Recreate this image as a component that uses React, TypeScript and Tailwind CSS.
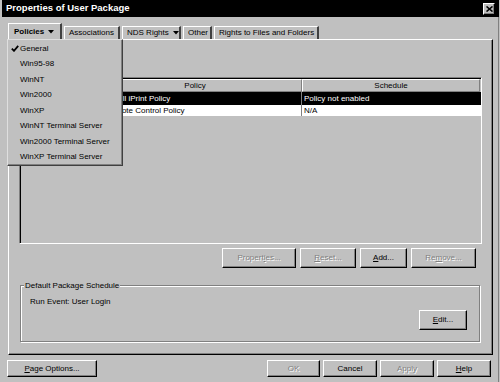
import React from 'react';

const raised =
  'border border-t-white border-l-white border-r-black border-b-black shadow-[inset_-1px_-1px_0_#808080]';
const disabledText = 'text-[#808080] [text-shadow:1px_1px_0_#ffffff]';
const tab =
  'shrink-0 whitespace-nowrap h-[13px] border-t border-l border-t-white border-l-white border-r-2 border-r-[#404040] flex items-center pl-[4px]';

type BtnProps = {
  children: React.ReactNode;
  w: string;
  h?: string;
  disabled?: boolean;
};

function Btn({ children, w, h = 'h-[20px]', disabled }: BtnProps) {
  return (
    <div
      className={`${w} ${h} ${raised} shrink-0 whitespace-nowrap flex items-center justify-center bg-[#c0c0c0] ${
        disabled ? disabledText : 'text-black'
      }`}
    >
      <span>{children}</span>
    </div>
  );
}

const U = ({ c }: { c: string }) => <span className="underline underline-offset-1">{c}</span>;

const Arrow = () => (
  <svg width="6" height="4" viewBox="0 0 6 4" className="ml-[4px] shrink-0">
    <path d="M0 0 L6 0 L3 3.5 Z" fill="#000" />
  </svg>
);

const menuItems = [
  'General',
  'Win95-98',
  'WinNT',
  'Win2000',
  'WinXP',
  'WinNT Terminal Server',
  'Win2000 Terminal Server',
  'WinXP Terminal Server',
];

const App: React.FC = () => {
  return (
    <div
      className="relative w-[500px] h-[382px] overflow-hidden bg-[#c0c0c0] flex flex-col text-[8px] text-black"
      style={{ fontFamily: '"Liberation Sans", Arial, sans-serif' }}
    >
      {/* title bar */}
      <div className="ml-[2px] mr-[1px] h-[17px] bg-black flex items-center justify-between pl-[4px] pr-[4px]">
        <span className="text-white font-bold text-[9.5px]">Properties of User Package</span>
        <div className={`w-[12px] h-[12px] ${raised} bg-[#c0c0c0] flex items-center justify-center`}>
          <svg width="7" height="6" viewBox="0 0 7 6">
            <path d="M0.5 0.5 L6.5 5.5 M6.5 0.5 L0.5 5.5" stroke="#000" strokeWidth="1.6" />
          </svg>
        </div>
      </div>

      {/* tabs */}
      <div className="mt-[6px] h-[16px] pl-[8px] flex items-end gap-[2px] relative z-10">
        <div className="shrink-0 whitespace-nowrap w-[54px] h-[17px] -mb-[1px] bg-[#c0c0c0] border-t border-l border-t-white border-l-white border-r-2 border-r-[#404040] flex items-center pl-[5px] font-bold">
          Policies
          <Arrow />
        </div>
        <div className={`${tab} w-[56px]`}>Associations</div>
        <div className={`${tab} w-[59px]`}>
          NDS Rights
          <Arrow />
        </div>
        <div className={`${tab} w-[29px]`}>Other</div>
        <div className={`${tab} w-[105px]`}>Rights to Files and Folders</div>
      </div>

      {/* panel */}
      <div className="ml-[8px] w-[485px] h-[316px] border border-t-white border-l-white border-r-black border-b-black shadow-[inset_-1px_-1px_0_#808080] flex flex-col">
        {/* table */}
        <div className="mt-[37px] ml-[10px] w-[463px] h-[167px] border border-t-[#808080] border-l-[#808080] border-r-white border-b-white shadow-[inset_1px_1px_0_#000] pt-[1px] pl-[1px] flex flex-col">
          <div className="flex h-[13px]">
            <div className="w-[67px] border border-t-white border-l-white border-r-[#808080] border-b-[#808080]" />
            <div className="w-[214px] border border-t-white border-l-white border-r-[#808080] border-b-[#808080] flex items-center justify-center">
              Policy
            </div>
            <div className="w-[178px] border border-t-white border-l-white border-r-[#808080] border-b-[#808080] flex items-center justify-center">
              Schedule
            </div>
          </div>
          <div className="flex h-[13px] bg-black text-white items-center whitespace-nowrap">
            <div className="w-[67px] h-full" />
            <div className="w-[214px] h-full flex items-center pl-[16px] border-r border-r-[#808080]">Novell iPrint Policy</div>
            <div className="w-[178px] h-full flex items-center pl-[2px]">Policy not enabled</div>
          </div>
          <div className="flex h-[12px] bg-white items-center border-b border-b-[#c0c0c0] whitespace-nowrap">
            <div className="w-[67px] h-full border-r border-r-[#c0c0c0]" />
            <div className="w-[214px] h-full flex items-center pl-[17px] border-r border-r-[#808080]">Remote Control Policy</div>
            <div className="w-[178px] h-full flex items-center pl-[2px]">N/A</div>
          </div>
        </div>

        {/* list buttons */}
        <div className="mt-[4px] ml-[213px] flex gap-[4px]">
          <Btn w="w-[74px]" disabled>
            Propert<U c="i" />es...
          </Btn>
          <Btn w="w-[56px]" disabled>
            <U c="R" />eset...
          </Btn>
          <Btn w="w-[47px]">
            <U c="A" />dd...
          </Btn>
          <Btn w="w-[65px]" disabled>
            Re<U c="m" />ove...
          </Btn>
        </div>

        {/* group box */}
        <div className="mt-[17px] ml-[11px] w-[460px] h-[57px] border border-[#808080] shadow-[inset_1px_1px_0_#fff,1px_1px_0_#fff] relative flex flex-col">
          <span className="absolute -top-[6px] left-[3px] bg-[#c0c0c0] px-[1px] leading-[11px] whitespace-nowrap">
            Default Package Schedule
          </span>
          <div className="mt-[10px] ml-[9px] leading-[11px]">Run Event: User Login</div>
          <div className="mt-[3px] ml-[398px]">
            <Btn w="w-[48px]">
              <U c="E" />dit...
            </Btn>
          </div>
        </div>
      </div>

      {/* bottom buttons */}
      <div className="mt-[5px] pl-[7px] flex">
        <Btn w="w-[90px]" h="h-[17px]">
          <U c="P" />age Options...
        </Btn>
        <div className="ml-[170px] flex gap-[3px]">
          <Btn w="w-[53px]" h="h-[17px]" disabled>
            OK
          </Btn>
          <Btn w="w-[54px]" h="h-[17px]">
            Cancel
          </Btn>
          <Btn w="w-[54px]" h="h-[17px]" disabled>
            Apply
          </Btn>
          <Btn w="w-[54px]" h="h-[17px]">
            <U c="H" />elp
          </Btn>
        </div>
      </div>

      {/* dropdown menu */}
      <div className="absolute left-[7px] top-[39px] w-[116px] h-[127px] z-20 bg-[#c0c0c0] border border-t-[#dfdfdf] border-l-[#dfdfdf] border-r-[#404040] border-b-[#404040] shadow-[inset_-1px_-1px_0_#808080] pt-[1px] flex flex-col">
        {menuItems.map((m, i) => (
          <div key={m} className="h-[15.5px] flex items-center whitespace-nowrap">
            <span className="w-[12px] flex justify-end pr-[1px]">
              {i === 0 && (
                <svg width="8" height="7" viewBox="0 0 8 7">
                  <path d="M0.8 3.6 L3 5.8 L7.2 0.8" stroke="#000" strokeWidth="1.8" fill="none" />
                </svg>
              )}
            </span>
            <span>{m}</span>
          </div>
        ))}
      </div>

      {/* window right edge */}
      <div className="absolute right-[1px] top-[17px] bottom-0 w-px bg-[#808080]" />
    </div>
  );
};

export default App;
